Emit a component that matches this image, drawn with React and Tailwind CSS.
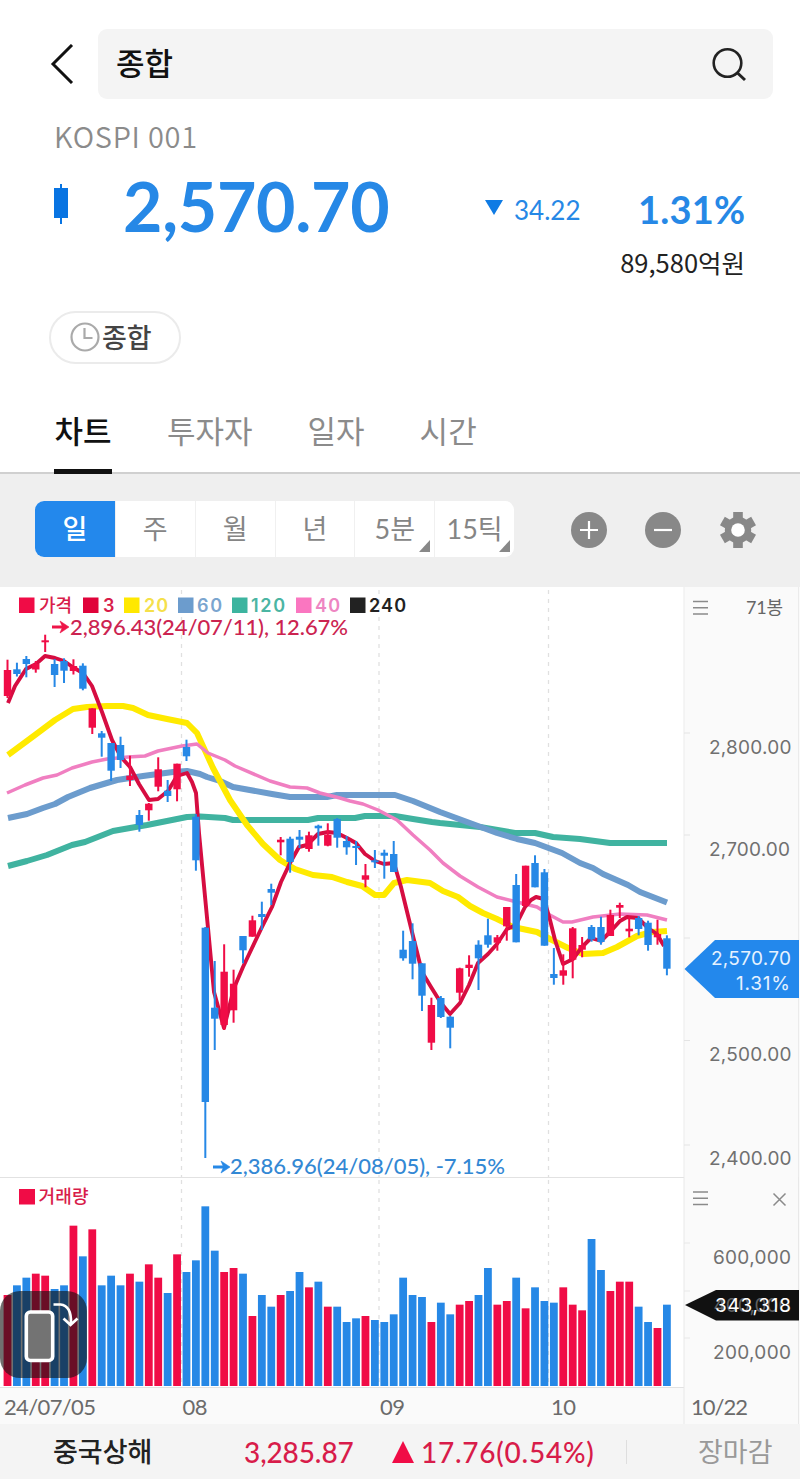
import React from "react";

const RED = "#f00c46";
const BLUE = "#2688e6";
const STEP = 9.42;
const xAt = (i) => 7.5 + i * STEP;

// [direction, high, body top, body bottom, low, volume bar top]
const BARS = [
  ["r", 659.7, 670, 696, 698, 375], ["b", 662.7, 669.3, 674, 676.5, 346], ["b", 656, 659, 664, 677.3, 323],
  ["r", 661, 664, 669.5, 672.7, 311], ["r", 634.7, 640.3, 642.3, 652, 317], ["b", 659, 664, 675, 687, 357],
  ["b", 658.3, 661, 670.7, 683, 346], ["r", 659.3, 666, 671, 674.5, 167], ["b", 663.3, 665.7, 688.7, 690.3, 259],
  ["r", 708.3, 708.3, 727.7, 734, 178], ["b", 731, 733.3, 737.7, 756.7, 346], ["b", 743, 743, 770.7, 781, 317],
  ["b", 736.7, 745, 760, 768, 346], ["r", 755.7, 775.7, 780, 786, 311], ["b", 810, 815, 825, 831.7, 335],
  ["r", 803, 803.7, 810.3, 820.7, 283], ["r", 757.3, 769.3, 786.7, 791.3, 323], ["b", 780, 790.7, 796, 802, 369],
  ["r", 763.7, 763.7, 789.3, 801.3, 253], ["b", 739.7, 747, 756.3, 761, 306], ["b", 814, 816.7, 860.3, 870.7, 271],
  ["b", 927, 927.7, 1102, 1158, 109], ["b", 961, 1007.7, 1018.7, 1050, 242], ["r", 944.3, 971.7, 1025, 1030, 306],
  ["r", 969.7, 983.7, 1010.3, 1022.7, 294], ["b", 936, 936, 950.3, 963.3, 311], ["r", 915.7, 920.3, 936.7, 936.7, 438],
  ["b", 901.7, 914, 917, 930, 375], ["b", 883.7, 889, 892.7, 905, 410], ["r", 837, 839.7, 842.3, 855.3, 375],
  ["b", 836.7, 838.7, 862, 872.7, 363], ["b", 830, 836.7, 839.7, 848, 306], ["r", 831.7, 835.3, 849, 851.7, 352],
  ["b", 824.7, 825.7, 828.3, 845.7, 335], ["r", 823.3, 834.7, 845.7, 846.3, 410], ["b", 818, 819, 837.7, 847.7, 410],
  ["b", 836, 841, 847.3, 854.7, 456], ["b", 841, 846, 848, 865, 445], ["r", 864, 875.3, 879.7, 887.3, 438],
  ["b", 850, 860.3, 862.3, 868, 450], ["b", 849.7, 852.7, 855.7, 878.7, 456], ["b", 841, 854, 872, 872, 433],
  ["b", 930.7, 949.7, 958.3, 960.7, 323], ["b", 923.3, 941, 963.7, 979.3, 375], ["b", 963.3, 963.3, 995.7, 1011, 381],
  ["r", 997.7, 1005, 1042.7, 1050, 456], ["b", 996, 998, 1017, 1018, 398], ["b", 1016, 1016.7, 1027.7, 1048.3, 433],
  ["r", 967.7, 968.3, 992.7, 1000.3, 404], ["r", 955.3, 964.7, 968, 976.7, 393], ["b", 940.3, 944.7, 958.3, 990, 375],
  ["b", 918.7, 935.3, 944.7, 947.7, 294], ["r", 935, 937.3, 942.7, 950.7, 404], ["r", 907, 907, 926.3, 940.7, 393],
  ["b", 874, 885, 942.3, 942.3, 323], ["r", 865.7, 865.7, 906, 906, 415], ["b", 855.3, 863, 887.3, 887.3, 352],
  ["b", 869, 872.3, 945.7, 945.7, 393], ["b", 948, 974, 978, 984.7, 398], ["r", 954.3, 970.3, 975.7, 984.7, 352],
  ["r", 927, 928.3, 959.7, 978.3, 404], ["r", 937, 945, 949.7, 957.3, 421], ["b", 925, 927, 939.3, 941.7, 207],
  ["b", 916.7, 927, 942, 944.7, 300], ["r", 909.7, 915, 936, 936, 363], ["r", 902.7, 905, 907.7, 918, 335],
  ["r", 916.7, 928.7, 931.3, 937.3, 335], ["b", 916, 918, 929, 935.3, 410], ["b", 920.7, 922.7, 945, 950.7, 456],
  ["r", 919.7, 934, 937.3, 944.7, 474], ["b", 935.3, 938.3, 968.7, 975.3, 404],
];

const LINES = [
  ["#40b3a0", 6, "8,866 27,861 47,855 72,845 85,842 113,831 147,825 187,817 200,816.5 225,818 233,820 308,820 318,818 355,818 365,816 395,816 413,819 432,822 440,823 480,827 515,833 535,833 553,837 580,839 610,843 667,843"],
  ["#6c9ccd", 6, "8,818 27,814 43,808 55,804 68,797 90,788 117,780 143,776 173,772 187,771 200,774 207,777 220,781 233,787 272,794 290,797 327,797 337,795 395,795 413,801 440,812 497,833 517,839 535,843 562,853 580,863 593,868 603,874 628,885 640,892 667,902.5"],
  ["#ffea00", 6, "8,755 35,735 55,720 73,709 87,707 107,706 123,706 133,708 148,715 167,719 187,723 197,733 213,768 230,800 247,825 263,844 280,860 295,869 313,875 332,877 347,882 362,886 375,895 384,895 394,883 407,880 430,883 443,891 458,897 470,906 483,913 497,919 513,927 537,932 550,939 568,948 583,954 603,953 617,947 637,936 652,932 667,931"],
  ["#f07fc1", 3.5, "7,793 25,785 43,778 57,775 72,768 92,762 107,759 128,757 145,756 158,751 182,746 197,744 208,753 225,760 235,766 270,781 290,787 307,788 320,793 340,798 350,801 363,804 378,810 397,820 413,835 430,850 443,863 460,876 478,887 497,897 513,901 537,907 548,914 563,922 572,922 593,917 620,914 647,915 667,920"],
  ["#d60d41", 3.9, "8,703 15,686 26,669 36,664 45,656 55,658 64,661 74,668 83,673 92,686 102,712 112,740 121,757 130,767 139,784 149,800 158,799 168,791 177,776 187,773 192,782 196,793 199,833 208,928 214,992 224,1028 234,988 243,967 252,948 262,927 272,907 281,882 290,863 299,847 307,845 318,834 328,832 337,833 347,838 356,843 365,854 375,861 384,864 394,863 401,887 412,932 422,972 431,987 441,1003 450,1014 460,1003 469,985 478,963 488,954 497,944 507,929 516,925 525,907 531,900 536,897 544,899 550,920 555,940 563,964 573,959 582,947 591,938 601,941 610,932 620,921 627,917 638,918 648,928 657,934 664,946"],
];

const LEGEND = [
  [19, "#f00c46", "가격", 39, 33, "#d81c4a"],
  [83, "#e0033a", "3", 103, 12, "#d81c4a"],
  [124, "#ffe800", "20", 144, 24, "#f5e04a"],
  [178, "#6c9ccd", "60", 197, 25, "#7ba5cf"],
  [232, "#3cb49f", "120", 251, 34, "#4bb5a3"],
  [296, "#fa76c0", "40", 315, 25, "#ee86c2"],
  [350, "#222222", "240", 369, 37, "#222222"],
];

const Label = ({ x, y, w, size, fill, weight = 400, children }) => (
  <text x={x} y={y} textLength={w} fontSize={size} fill={fill} fontWeight={weight}>
    {children}
  </text>
);

function Menu({ y }) {
  return <path d={`M693 ${y}h15M693 ${y + 6.3}h15M693 ${y + 12.6}h15`} stroke="#8a8a8a" strokeWidth="1.5" />;
}

function Arrow({ x, y, color }) {
  return (
    <g>
      <path d={`M${x} ${y}h13`} stroke={color} strokeWidth="3" />
      <path d={`M${x + 8} ${y - 6}l9 6l-9 6l2.500 -6z`} fill={color} stroke={color} strokeWidth="0.6" strokeLinejoin="round" />
    </g>
  );
}

function PriceChart() {
  return (
    <svg className="relative block h-[590px] w-[800px] overflow-visible" viewBox="0 587 800 590">
      <rect x="684" y="587" width="116" height="590" fill="#fafafa" />
      <path d="M684 587V1177M798.5 587V1177" stroke="#ebebeb" />
      <path d="M684 733h6M684 835h6M684 938h6M684 1040.5h6M684 1145h6" stroke="#e4e4e4" />
      <path d="M181.5 590V1177M379 590V1177M548.5 590V1177" stroke="#e0e0e0" strokeDasharray="4 5" strokeWidth="1.3" />
      {LINES.map(([color, width, points]) => (
        <polyline key={color} points={points} fill="none" stroke={color} strokeWidth={width} strokeLinejoin="round" />
      ))}
      {BARS.map(([dir, high, top, bottom, low], i) => (
        <g key={i} fill={dir === "r" ? RED : BLUE}>
          <rect x={xAt(i) - 1} y={high} width="2" height={low - high} />
          <rect x={xAt(i) - 3.7} y={top} width="7.4" height={bottom - top} />
        </g>
      ))}
      <g className="font-[Inter,'Noto_Sans_CJK_KR',sans-serif]">
        {LEGEND.map(([x, fill, text, tx, w, color]) => (
          <g key={text}>
            <rect x={x} y="597.500" width="15.5" height="15.500" fill={fill} />
            <Label x={tx} y={611.5} w={w} size={18} fill={color} weight={text === "가격" ? 500 : 600}>{text}</Label>
          </g>
        ))}
      </g>
      <Arrow x={52} y={627} color="#ee1548" />
      <Label x={70} y={634.5} w={278} size={22} fill="#cc2350" weight={500}>2,896.43(24/07/11), 12.67%</Label>
      <Arrow x={213} y={1167} color="#2688e6" />
      <Label x={230} y={1173.5} w={275} size={22} fill="#3388d4" weight={500}>2,386.96(24/08/05), -7.15%</Label>
      <Menu y={601.5} />
      <Label x={746} y={614} w={37} size={18} fill="#666">71봉</Label>
      <g className="font-[Inter]">
        <Label x={709} y={754} w={82.5} size={19} fill="#707070">2,800.00</Label>
        <Label x={709} y={856} w={81} size={19} fill="#707070">2,700.00</Label>
        <Label x={709} y={1061} w={82.5} size={19} fill="#707070">2,500.00</Label>
        <Label x={709} y={1165} w={82.5} size={19} fill="#707070">2,400.00</Label>
        <path d="M684.5 969L715 940H799V998H715Z" fill="#2388ec" />
        <Label x={711} y={965} w={80} size={19} fill="#e6f2ff">2,570.70</Label>
        <Label x={736} y={990} w={54} size={19} fill="#e6f2ff">1.31%</Label>
      </g>
    </svg>
  );
}

function VolumeChart() {
  return (
    <svg className="block h-[247px] w-[800px]" viewBox="0 1177 800 247">
      <rect x="684" y="1177" width="116" height="247" fill="#fafafa" />
      <rect x="0" y="1387" width="684" height="37" fill="#fafafa" />
      <path d="M0 1177.5H684M0 1387.5H684" stroke="#e2e2e2" />
      <path d="M684 1177V1424M798.5 1177V1424M684 1243h6M684 1291h6M684 1338h6" stroke="#e8e8e8" />
      <path d="M181.5 1180V1388M379 1180V1388M548.5 1180V1388" stroke="#e0e0e0" strokeDasharray="4 5" strokeWidth="1.3" />
      {BARS.map((bar, i) => {
        const top = 1170 + bar[5] / 3;
        return <rect key={i} x={xAt(i) - 3.9} y={top} width="7.8" height={1386 - top} fill={bar[0] === "r" ? RED : BLUE} />;
      })}
      <rect x="19" y="1189" width="16" height="15.500" fill={RED} />
      <Label x={38.5} y={1202.5} w={50} size={18} fill="#d81c4a" weight={500}>거래량</Label>
      <Menu y={1192} />
      <path d="M773.5 1193.5l12 12M785.5 1193.5l-12 12" stroke="#8a8a8a" strokeWidth="1.5" />
      <g className="font-[Inter]">
        <Label x={713} y={1264} w={78} size={19} fill="#707070">600,000</Label>
        <Label x={713} y={1358.5} w={78} size={19} fill="#707070">200,000</Label>
        <path d="M685 1305L716 1290H799V1320.5H716Z" fill="#111" />
        <Label x={713.5} y={1312} w={77} size={19} fill="#5f5f5f">400,000</Label>
        <Label x={715} y={1312} w={76} size={19} fill="#fff">343,318</Label>
      </g>
      <Label x={4} y={1415} w={92} size={22} fill="#6b6b6b">24/07/05</Label>
      <Label x={182.5} y={1415} w={25} size={22} fill="#6b6b6b">08</Label>
      <Label x={380} y={1415} w={25} size={22} fill="#6b6b6b">09</Label>
      <Label x={551} y={1415} w={25} size={22} fill="#6b6b6b">10</Label>
      <Label x={691} y={1415} w={57} size={22} fill="#6b6b6b">10/22</Label>
      <rect x="0" y="1291" width="87" height="87" rx="20" fill="#111" fillOpacity="0.6" />
      <rect x="26.3" y="1312" width="26.4" height="48.5" rx="4" fill="#737373" stroke="#fff" strokeWidth="3.6" />
      <path d="M53.5 1304.5h7q11 1 10.500 19M63.500 1318.500l7 6.500l7-6.500" fill="none" stroke="#fff" strokeWidth="2.700" />
    </svg>
  );
}

const PERIODS = [["일"], ["주"], ["월"], ["년"], ["5분", true], ["15틱", true]];

export default function App() {
  return (
    <div className="flex h-[1479px] w-[800px] flex-col overflow-hidden bg-white font-[Lato,'Noto_Sans_CJK_KR',sans-serif] leading-none">
      <header className="flex h-[99px] shrink-0 items-end">
        <div className="flex h-[70px] w-[98px] items-center pl-[50px]">
          <svg className="h-10 w-6" viewBox="0 0 24 40" fill="none" stroke="#111" strokeWidth="3">
            <path d="M22 1L3 20l19 19" />
          </svg>
        </div>
        <div className="flex h-[70px] w-[675px] items-center justify-between rounded-[9px] bg-[#f4f4f4] pr-[26px] pl-[18px]">
          <span className="pb-[2px] text-[31px] font-medium text-[#111]">종합</span>
          <svg className="h-9 w-9" viewBox="0 0 36 36" fill="none" stroke="#222" strokeWidth="2.600">
            <circle cx="16.500" cy="17" r="13.800" />
            <path d="M26 26.500l8 7.500" strokeWidth="3" />
          </svg>
        </div>
      </header>

      <div className="flex h-[76px] shrink-0 items-center pb-[4px] pl-[54px] font-['Noto_Sans_CJK_KR',sans-serif] text-[29px] font-[350] tracking-[0.75px] text-[#8b8b8b]">
        KOSPI 001
      </div>

      <div className="flex h-[65px] shrink-0 items-center text-[#2688e6]">
        <svg className="mb-[7px] ml-[53px] h-10 w-4" viewBox="0 0 16 40" fill="#0874e2">
          <path d="M7 0h2v40H7zM1 4h14v30H1z" />
        </svg>
        <div className="mb-1 ml-[54px] w-[361px] text-[68px] font-bold tracking-[-0.3px]">2,570.70</div>
        <svg className="h-4 w-5" viewBox="0 0 20 16" fill="#0f7be4">
          <path d="M1 0h18l-9 15z" />
        </svg>
        <div className="mt-1 ml-[10px] w-[124px] text-[26px]">34.22</div>
        <div className="mt-[2px] text-[38px] font-bold tracking-[0.2px]">1.31%</div>
      </div>

      <div className="flex h-[44px] shrink-0 items-center justify-end pr-[55px] font-['Noto_Sans_CJK_KR',sans-serif] text-[25.5px] text-[#222]">
        89,580억원
      </div>

      <div className="flex h-[106px] shrink-0 items-start pt-[27px] pl-[49px]">
        <div className="flex h-[53px] w-[132px] items-center rounded-full border-2 border-[#ebebeb] pl-[19px]">
          <svg className="mb-[2px] h-[30px] w-[30px]" viewBox="0 0 30 30" fill="none" stroke="#aaa" strokeWidth="2.200">
            <circle cx="15" cy="15" r="13.500" />
            <path d="M14.500 6v10h8" />
          </svg>
          <span className="ml-[2px] text-[27px] font-medium text-[#444]">종합</span>
        </div>
      </div>

      <nav className="flex h-[84px] shrink-0 gap-[55px] border-b-2 border-[#d0d0d0] pl-[54px] text-[31px] text-[#8b8b8b]">
        <div className="mb-[-2px] flex w-[58px] items-center justify-center border-b-[5px] border-[#111] pt-[3px] font-medium text-[#111]">차트</div>
        <div className="flex items-center">투자자</div>
        <div className="flex items-center">일자</div>
        <div className="flex items-center">시간</div>
      </nav>

      <section className="flex h-[113px] shrink-0 items-center bg-[#efefef] pb-[2px] pl-[35px]">
        <div className="mb-[2px] grid h-14 w-[479px] grid-cols-6 overflow-hidden rounded-[9px] bg-white text-[27px] text-[#858585]">
          {PERIODS.map(([name, more], i) => (
            <div
              key={name}
              className={
                i === 0
                  ? "flex items-center justify-center bg-[#2388ec] font-medium text-white"
                  : "relative flex items-center justify-center border-l border-[#f0f0f0]"
              }
            >
              {name}
              {more && (
                <svg className="absolute right-[4px] bottom-[5px] h-3 w-[11px]" viewBox="0 0 11 12" fill="#888">
                  <path d="M11 0v12H0z" />
                </svg>
              )}
            </div>
          ))}
        </div>
        <svg className="ml-[57px] h-9 w-9" viewBox="0 0 36 36">
          <circle cx="18" cy="18" r="18" fill="#888" />
          <path d="M9 18h18M18 9v18" stroke="#fff" strokeWidth="2.200" />
        </svg>
        <svg className="ml-[38px] h-9 w-9" viewBox="0 0 36 36">
          <circle cx="18" cy="18" r="18" fill="#888" />
          <path d="M9 18h18" stroke="#fff" strokeWidth="2.200" />
        </svg>
        <svg className="ml-[39px] h-9 w-9" viewBox="0 0 36 36" fill="#888">
          <circle cx="18" cy="18" r="13.200" />
          {[0, 60, 120].map((deg) => (
            <path key={deg} d="M13.200 0h9.600v36h-9.600z" transform={`rotate(${deg} 18 18)`} />
          ))}
          <circle cx="18" cy="18" r="6.800" fill="#fff" />
        </svg>
      </section>

      <PriceChart />
      <VolumeChart />

      <footer className="flex h-[55px] shrink-0 items-center bg-[#f4f4f4] text-[27px] text-[#d81c4a]">
        <div className="ml-[53px] w-[191px] font-medium text-[#222]">중국상해</div>
        <div className="w-[148px] text-[28px] font-medium tracking-[-0.1px]">3,285.87</div>
        <svg className="h-[22px] w-[22px]" viewBox="0 0 22 22" fill={RED}>
          <path d="M11 0l11 22H0z" />
        </svg>
        <div className="ml-[7px] w-[205px] text-[28px] font-medium tracking-[0.75px]">17.76(0.54%)</div>
        <div className="h-6 w-px bg-[#dedede]" />
        <div className="ml-[71px] text-[#999]">장마감</div>
      </footer>
    </div>
  );
}
